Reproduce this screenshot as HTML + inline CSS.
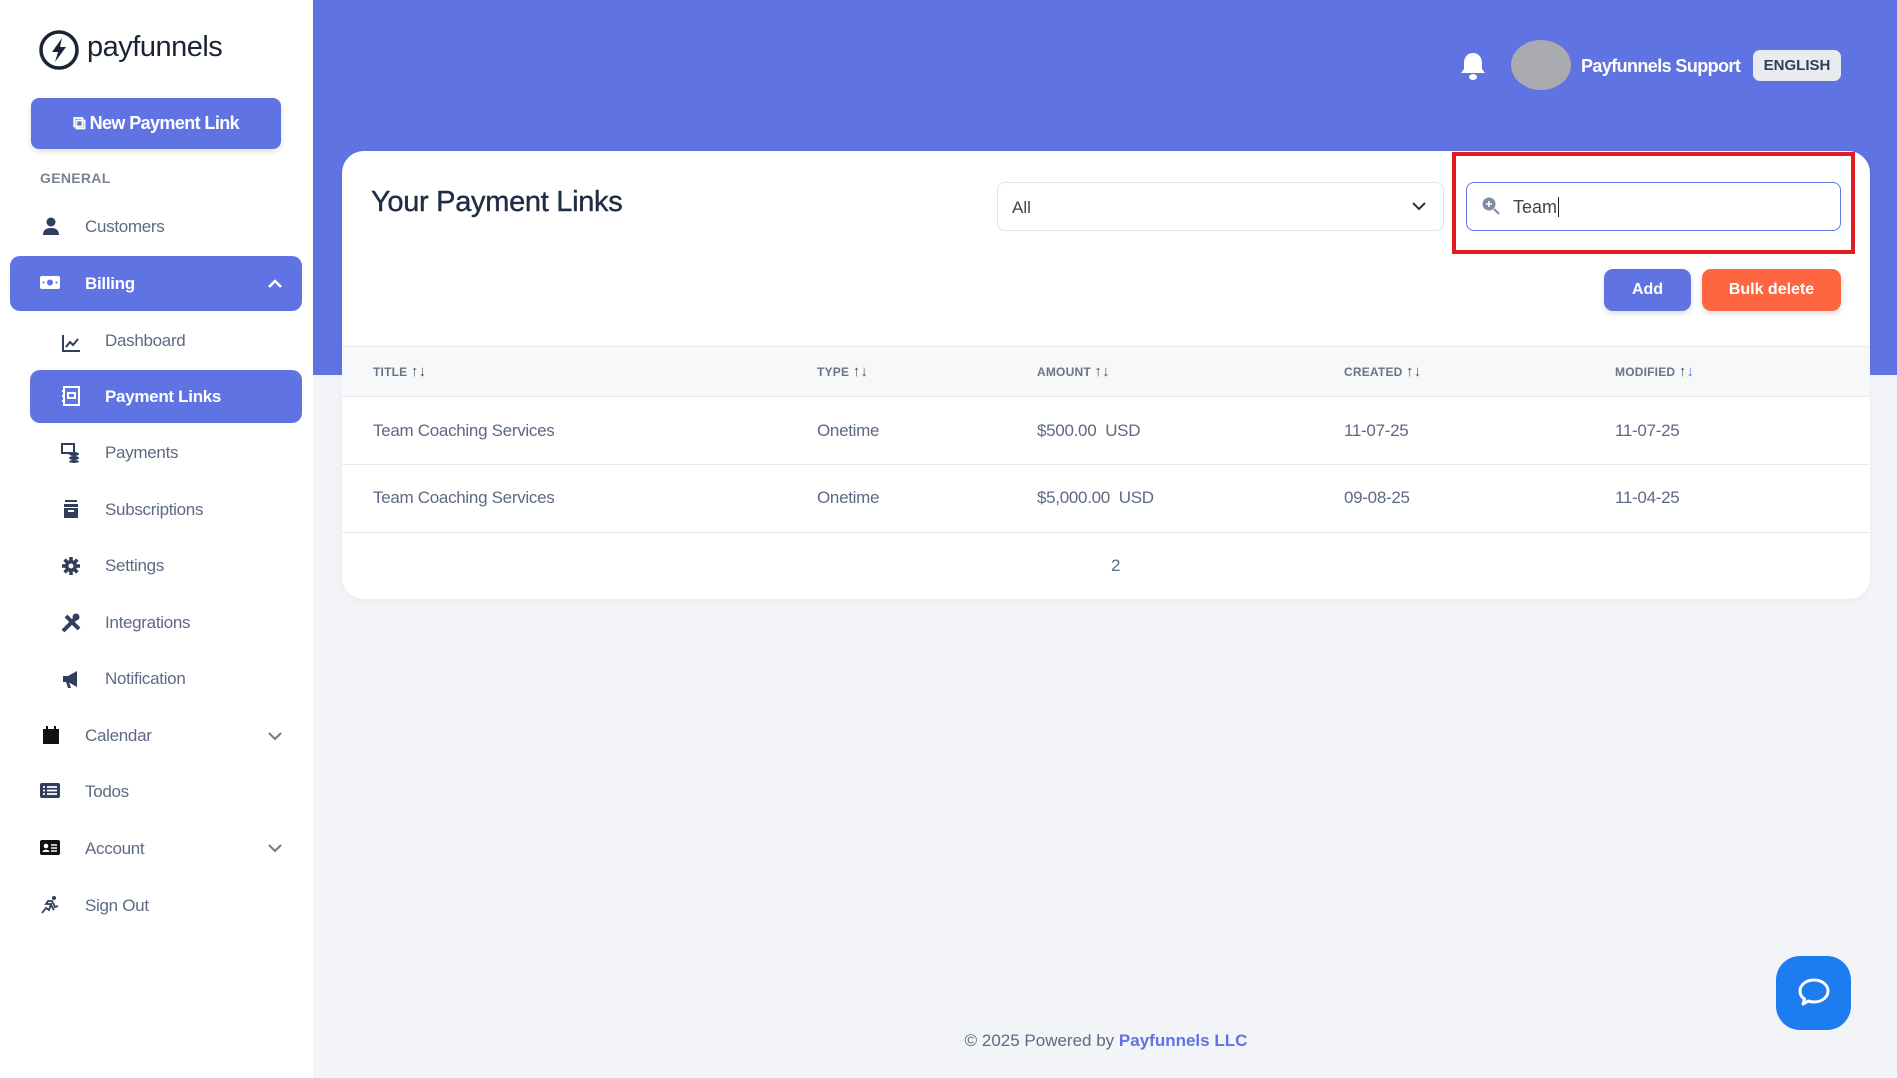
<!DOCTYPE html>
<html><head><meta charset="utf-8"><style>
*{box-sizing:border-box;margin:0;padding:0}
body{width:1897px;height:1078px;position:relative;overflow:hidden;background:#f3f4f7;font-family:"Liberation Sans",sans-serif;color:#56627a}
.abs{position:absolute}
.side{left:0;top:0;width:313px;height:1078px;background:#fff}
.hdr{left:313px;top:0;width:1584px;height:375px;background:#5f73e3}
.nav{position:absolute;font-size:17px;color:#5d6a83;letter-spacing:-0.3px;white-space:nowrap}
.ic{position:absolute;width:20px;height:20px}
.card{left:342px;top:151px;width:1528px;height:448px;background:#fff;border-radius:22px;box-shadow:0 2px 8px rgba(0,0,0,.04)}
.th{position:absolute;top:363px;font-size:12px;font-weight:bold;color:#6b7385;letter-spacing:.2px}
.th span.a{font-size:15px;font-weight:normal;color:#555}
.td{position:absolute;font-size:17px;color:#5d6a83;letter-spacing:-0.3px}
</style></head><body>
<div class="abs side"></div>
<div class="abs hdr"></div>

<svg class="abs" style="left:38px;top:29px" width="42" height="42" viewBox="0 0 42 42"><circle cx="21" cy="21" r="18" fill="none" stroke="#1b2433" stroke-width="3.5"/><path d="M24 9 L14 23 H20 L17 33 L28 18 H22 Z" fill="#1b2433"/></svg>
<div class="abs" style="left:87px;top:31px;font-size:29px;color:#1b2433;letter-spacing:-0.5px">payfunnels</div>

<div class="abs" style="left:31px;top:98px;width:250px;height:51px;background:#5f73e3;border-radius:8px;box-shadow:0 3px 6px rgba(0,0,0,.12);color:#fff;font-weight:bold;font-size:18px;letter-spacing:-0.6px;text-align:center;line-height:51px">&#x29C9; New Payment Link</div>
<div class="abs" style="left:40px;top:170px;font-size:14px;font-weight:bold;color:#7a8395;letter-spacing:.3px">GENERAL</div>

<svg class="ic" style="left:41px;top:216px" viewBox="0 0 20 20"><circle cx="10" cy="6" r="4.5" fill="#2f3e5c"/><path d="M2 19c0-5 3-7 8-7s8 2 8 7z" fill="#2f3e5c"/></svg>
<div class="nav" style="left:85px;top:217px">Customers</div>

<div class="abs" style="left:10px;top:256px;width:292px;height:55px;background:#5f73e3;border-radius:10px"></div>
<svg class="ic" style="left:40px;top:273px" viewBox="0 0 20 20"><rect x="0" y="3" width="20" height="13" rx="2" fill="#fff"/><circle cx="10" cy="9.5" r="3" fill="#5f73e3"/><circle cx="3.5" cy="9.5" r="1" fill="#5f73e3"/><circle cx="16.5" cy="9.5" r="1" fill="#5f73e3"/></svg>
<div class="nav" style="left:85px;top:274px;color:#fff;font-weight:bold">Billing</div>
<svg class="abs" style="left:267px;top:278px" width="16" height="12" viewBox="0 0 16 12"><path d="M2 9 L8 3 L14 9" fill="none" stroke="#fff" stroke-width="2.5"/></svg>

<svg class="ic" style="left:61px;top:333px" viewBox="0 0 20 20"><path d="M2 2V18H19" fill="none" stroke="#2f3e5c" stroke-width="2"/><path d="M5 14L9 9L12 12L17 6" fill="none" stroke="#2f3e5c" stroke-width="2"/></svg>
<div class="nav" style="left:105px;top:331px">Dashboard</div>

<div class="abs" style="left:30px;top:370px;width:272px;height:53px;background:#5f73e3;border-radius:10px"></div>
<svg class="ic" style="left:61px;top:386px" viewBox="0 0 20 20"><rect x="3" y="1" width="15" height="18" fill="none" stroke="#fff" stroke-width="2"/><rect x="7" y="7" width="7" height="5" fill="none" stroke="#fff" stroke-width="2"/><path d="M1 5h3M1 10h3M1 15h3" stroke="#fff" stroke-width="2"/></svg>
<div class="nav" style="left:105px;top:387px;color:#fff;font-weight:bold">Payment Links</div>

<svg class="ic" style="left:61px;top:443px" viewBox="0 0 20 20"><rect x="1" y="1" width="12" height="9" fill="none" stroke="#2f3e5c" stroke-width="2"/><ellipse cx="13" cy="11" rx="5" ry="2" fill="#2f3e5c"/><ellipse cx="13" cy="15" rx="5" ry="2" fill="#2f3e5c"/><ellipse cx="13" cy="18.5" rx="5" ry="1.5" fill="#2f3e5c"/></svg>
<div class="nav" style="left:105px;top:443px">Payments</div>
<svg class="ic" style="left:61px;top:499px" viewBox="0 0 20 20"><rect x="4" y="1" width="12" height="2" fill="#2f3e5c"/><rect x="3" y="5" width="14" height="3" fill="#2f3e5c"/><rect x="3" y="9" width="14" height="10" fill="#2f3e5c"/><rect x="7" y="11" width="6" height="2" fill="#fff"/></svg>
<div class="nav" style="left:105px;top:500px">Subscriptions</div>
<svg class="ic" style="left:61px;top:556px" viewBox="0 0 20 20"><circle cx="10" cy="10" r="6" fill="#2f3e5c"/><path d="M10 1v18M1 10h18M3.6 3.6l12.8 12.8M16.4 3.6L3.6 16.4" stroke="#2f3e5c" stroke-width="3.5"/><circle cx="10" cy="10" r="2.5" fill="#fff"/></svg>
<div class="nav" style="left:105px;top:556px">Settings</div>
<svg class="ic" style="left:61px;top:613px" viewBox="0 0 20 20"><path d="M2 18L15 5M5 3L18 16" stroke="#2f3e5c" stroke-width="4"/><circle cx="15" cy="4" r="3.5" fill="#2f3e5c"/></svg>
<div class="nav" style="left:105px;top:613px">Integrations</div>
<svg class="ic" style="left:61px;top:669px" viewBox="0 0 20 20"><path d="M2 7h5l9-5v16l-9-5H2z" fill="#2f3e5c"/><path d="M5 13l2 6h3l-2-6" fill="#2f3e5c"/></svg>
<div class="nav" style="left:105px;top:669px">Notification</div>

<svg class="ic" style="left:41px;top:725px" viewBox="0 0 20 20"><rect x="2" y="4" width="16" height="15" fill="#111"/><rect x="5" y="1" width="2" height="4" fill="#111"/><rect x="13" y="1" width="2" height="4" fill="#111"/></svg>
<div class="nav" style="left:85px;top:726px">Calendar</div>
<svg class="abs" style="left:267px;top:730px" width="16" height="12" viewBox="0 0 16 12"><path d="M2 3L8 9L14 3" fill="none" stroke="#777" stroke-width="2"/></svg>
<svg class="ic" style="left:40px;top:781px" viewBox="0 0 20 20"><rect x="0" y="2" width="20" height="15" rx="2" fill="#2f3e5c"/><path d="M3 6h2M7 6h10M3 9.5h2M7 9.5h10M3 13h2M7 13h10" stroke="#fff" stroke-width="1.8"/></svg>
<div class="nav" style="left:85px;top:782px">Todos</div>
<svg class="ic" style="left:40px;top:838px" viewBox="0 0 20 20"><rect x="0" y="2" width="20" height="15" rx="2" fill="#111"/><circle cx="6" cy="8" r="2.3" fill="#fff"/><path d="M2.5 14c0-3 7-3 7 0z" fill="#fff"/><path d="M11 7h6M11 10h6M11 13h6" stroke="#fff" stroke-width="1.5"/></svg>
<div class="nav" style="left:85px;top:839px">Account</div>
<svg class="abs" style="left:267px;top:842px" width="16" height="12" viewBox="0 0 16 12"><path d="M2 3L8 9L14 3" fill="none" stroke="#777" stroke-width="2"/></svg>
<svg class="ic" style="left:40px;top:895px" viewBox="0 0 20 20"><circle cx="14" cy="3" r="2" fill="#2f3e5c"/><path d="M2 18L6 13L9 15L11 9L6 9L8 6L12 6L15 12L18 11M11 10L14 15" fill="none" stroke="#2f3e5c" stroke-width="1.8"/></svg>
<div class="nav" style="left:85px;top:896px">Sign Out</div>

<svg class="abs" style="left:1459px;top:51px" width="28" height="30" viewBox="0 0 28 30"><path d="M14 2c-6 0-9 5-9 10v6l-3 4h24l-3-4v-6c0-5-3-10-9-10z" fill="#fff"/><ellipse cx="14" cy="26" rx="4" ry="3" fill="#fff"/></svg>
<div class="abs" style="left:1511px;top:40px;width:60px;height:50px;border-radius:50%;background:#a9abb1"></div>
<div class="abs" style="left:1581px;top:56px;color:#fff;font-weight:bold;font-size:18px;letter-spacing:-0.6px">Payfunnels Support</div>
<div class="abs" style="left:1753px;top:50px;width:88px;height:31px;border-radius:7px;background:#e9ebef;color:#2f3e5c;font-weight:bold;font-size:15px;text-align:center;line-height:31px">ENGLISH</div>

<div class="abs card"></div>
<div class="abs" style="left:371px;top:186px;font-size:29px;color:#1f2d45;letter-spacing:-0.3px;-webkit-text-stroke:0.4px #1f2d45">Your Payment Links</div>
<div class="abs" style="left:997px;top:182px;width:447px;height:49px;border:1px solid #dfe2e7;border-radius:8px;background:#fff"></div>
<div class="abs" style="left:1012px;top:198px;font-size:17px;color:#444">All</div>
<svg class="abs" style="left:1411px;top:200px" width="16" height="12" viewBox="0 0 16 12"><path d="M2 3L8 9L14 3" fill="none" stroke="#333" stroke-width="2"/></svg>
<div class="abs" style="left:1452px;top:152px;width:403px;height:102px;border:4px solid #e31b23"></div>
<div class="abs" style="left:1466px;top:182px;width:375px;height:49px;border:1.5px solid #6275e0;border-radius:8px;background:#fff"></div>
<svg class="abs" style="left:1481px;top:196px" width="20" height="20" viewBox="0 0 20 20"><circle cx="8" cy="8" r="6.5" fill="#7f8ba0"/><path d="M8 5v6M5 8h6" stroke="#fff" stroke-width="1.6"/><path d="M13 13l5 5" stroke="#7f8ba0" stroke-width="2"/></svg>
<div class="abs" style="left:1513px;top:197px;font-size:18px;color:#444">Team<span style="border-left:1px solid #222;margin-left:1px"></span></div>
<div class="abs" style="left:1604px;top:269px;width:87px;height:42px;background:#5f73e3;border-radius:9px;color:#fff;font-weight:bold;font-size:16px;text-align:center;line-height:42px;box-shadow:0 3px 6px rgba(0,0,0,.12)">Add</div>
<div class="abs" style="left:1702px;top:269px;width:139px;height:42px;background:#fd6641;border-radius:9px;color:#fff;font-weight:bold;font-size:16px;text-align:center;line-height:42px;box-shadow:0 3px 6px rgba(0,0,0,.12)">Bulk delete</div>

<div class="abs" style="left:342px;top:346px;width:1528px;height:51px;background:#f7f8fa;border-top:1px solid #e8eaee;border-bottom:1px solid #e8eaee"></div>
<div class="th" style="left:373px">TITLE <span class="a">↑↓</span></div>
<div class="th" style="left:817px">TYPE <span class="a">↑↓</span></div>
<div class="th" style="left:1037px">AMOUNT <span class="a">↑↓</span></div>
<div class="th" style="left:1344px">CREATED <span class="a">↑↓</span></div>
<div class="th" style="left:1615px">MODIFIED <span class="a">↑<span style="color:#5f73e3">↓</span></span></div>

<div class="td" style="left:373px;top:421px">Team Coaching Services</div>
<div class="td" style="left:817px;top:421px">Onetime</div>
<div class="td" style="left:1037px;top:421px">$500.00&nbsp; USD</div>
<div class="td" style="left:1344px;top:421px">11-07-25</div>
<div class="td" style="left:1615px;top:421px">11-07-25</div>
<div class="abs" style="left:342px;top:464px;width:1528px;height:1px;background:#e8eaee"></div>
<div class="td" style="left:373px;top:488px">Team Coaching Services</div>
<div class="td" style="left:817px;top:488px">Onetime</div>
<div class="td" style="left:1037px;top:488px">$5,000.00&nbsp; USD</div>
<div class="td" style="left:1344px;top:488px">09-08-25</div>
<div class="td" style="left:1615px;top:488px">11-04-25</div>
<div class="abs" style="left:342px;top:532px;width:1528px;height:1px;background:#e8eaee"></div>
<div class="td" style="left:1111px;top:556px">2</div>

<div class="abs" style="left:0;top:1031px;width:2212px;text-align:center;font-size:17px;color:#5d6a83">© 2025 Powered by <b style="color:#5f73e3">Payfunnels LLC</b></div>

<div class="abs" style="left:1776px;top:956px;width:75px;height:74px;border-radius:24px;background:#1c7cf0"></div>
<svg class="abs" style="left:1795px;top:975px" width="38" height="36" viewBox="0 0 38 36"><path d="M19 5c8 0 14 5 14 11s-6 11-14 11c-2 0-4-.3-5.5-1L8 29l1.5-5C6.5 22 5 19 5 16 5 10 11 5 19 5z" fill="none" stroke="#fff" stroke-width="3" stroke-linejoin="round"/></svg>
</body></html>
